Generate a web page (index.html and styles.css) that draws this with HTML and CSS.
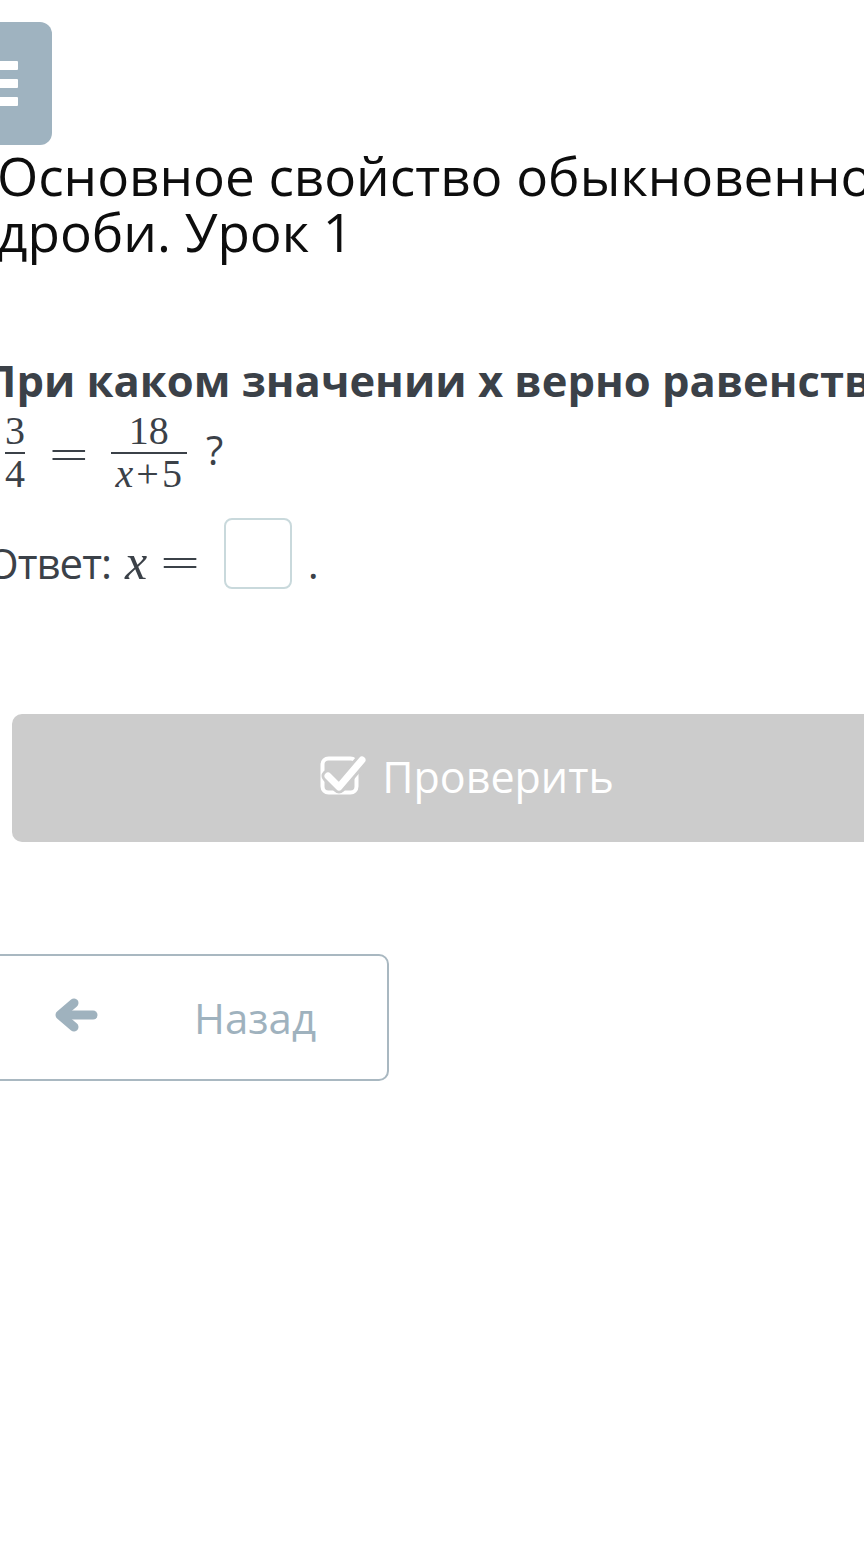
FILE: index.html
```html
<!DOCTYPE html>
<html lang="ru">
<head>
<meta charset="utf-8">
<link rel="stylesheet" href="styles.css">
</head>
<body>
<div class="page">
  <div class="menu-btn">
    <span class="bar"></span><span class="bar"></span><span class="bar"></span>
  </div>
  <h1 class="title">Основное свойство обыкновенной дроби. Урок 1</h1>
  <div class="question">
    <p class="q-text">При каком значении x верно равенство</p>
    <div class="formula">
      <span class="frac small"><span class="num">3</span><span class="den">4</span></span>
      <span class="eq">=</span>
      <span class="frac wide"><span class="num">18</span><span class="den"><i>x</i><span class="plus">+</span>5</span></span>
      <span class="qmark">?</span>
    </div>
    <div class="answer">
      <span class="ans-text">
        <span class="ans-label">Ответ:</span>
        <span class="ans-x"><i>x</i></span>
        <span class="ans-eq">=</span>
      </span>
      <span class="ans-box"></span>
      <span class="ans-dot">.</span>
    </div>
  </div>
  <div class="check-row">
    <div class="check-btn">
      <svg class="check-icon" viewBox="0 0 46 40" width="46" height="40">
        <rect x="2.5" y="2.5" width="34" height="34" rx="6" fill="none" stroke="#fff" stroke-width="4"/>
        <path d="M8 20 L19 31 L42 4" fill="none" stroke="#cccccc" stroke-width="13" stroke-linecap="round" stroke-linejoin="round"/>
        <path d="M8 20 L19 31 L42 4" fill="none" stroke="#fff" stroke-width="7" stroke-linecap="round" stroke-linejoin="round"/>
      </svg>
      <span class="check-text">Проверить</span>
    </div>
  </div>
  <div class="nav-row">
    <div class="back-btn">
      <svg class="back-icon" viewBox="0 0 46 36" width="46" height="36">
        <path d="M21 6 L7 18 L21 30" fill="none" stroke="#9fb2be" stroke-width="9" stroke-linecap="round" stroke-linejoin="round"/>
        <path d="M9 18 H40" fill="none" stroke="#9fb2be" stroke-width="9" stroke-linecap="round"/>
      </svg>
      <span class="back-text">Назад</span>
    </div>
  </div>
</div>
</body>
</html>
```
FILE: styles.css
```css
html, body {
  margin: 0;
  padding: 0;
  background: #fff;
  overflow: hidden;
}
body {
  width: 864px;
  height: 1554px;
  font-family: "Open Sans", "Noto Sans", sans-serif;
}
.page {
  margin-left: -10px;
  width: 1000px;
  padding-top: 22px;
}
.menu-btn {
  margin-left: -61px;
  width: 123px;
  height: 123px;
  border-radius: 12px;
  background: #9fb3c0;
  display: flex;
  flex-direction: column;
  justify-content: center;
  align-items: center;
  gap: 9px;
}
.menu-btn .bar {
  display: block;
  width: 55px;
  height: 9px;
  background: #fff;
  border-radius: 1px;
}
.title {
  margin: 3px 0 0 7px;
  font-weight: 400;
  font-size: 53px;
  line-height: 56px;
  color: #0d0d0d;
  width: 960px;
}
.question {
  margin-top: 97px;
  color: #3b4148;
}
.q-text {
  margin: 0 0 0 -6px;
  font-weight: 700;
  font-size: 43.5px;
  line-height: 48px;
  white-space: nowrap;
}
.formula {
  display: flex;
  align-items: center;
  margin-left: 15px;
  margin-top: 8px;
  font-family: "Liberation Serif", "DejaVu Serif", serif;
}
.frac {
  display: inline-flex;
  flex-direction: column;
  align-items: stretch;
  text-align: center;
  font-size: 40px;
  line-height: 36px;
}
.frac .num {
  padding: 0 0 3px;
}
.frac .den {
  border-top: 2px solid #3b4148;
  padding: 2px 0 0;
}
.frac.wide .num, .frac.wide .den {
  padding-left: 5px;
  padding-right: 5px;
}
.plus {
  margin: 0 3px;
}
.eq {
  font-family: "DejaVu Sans", sans-serif;
  font-weight: 200;
  font-size: 52px;
  line-height: 1;
  margin: 0 20px 0 22px;
}
.qmark {
  font-family: "Open Sans", sans-serif;
  font-size: 40px;
  margin-left: 19px;
  margin-top: -6px;
}
.answer {
  display: flex;
  align-items: flex-start;
  margin-top: 26px;
  height: 72px;
}
.ans-text {
  display: flex;
  align-items: baseline;
  margin-top: 20px;
  margin-left: -4px;
}
.ans-label {
  font-size: 42px;
  line-height: 50px;
  letter-spacing: -1px;
}
.ans-x {
  font-family: "Liberation Serif", "DejaVu Serif", serif;
  font-size: 50px;
  line-height: 40px;
  margin-left: 14px;
}
.ans-eq {
  font-family: "DejaVu Sans", sans-serif;
  font-weight: 200;
  font-size: 52px;
  line-height: 40px;
  margin-left: 11px;
}
.ans-box {
  width: 64px;
  height: 67px;
  border: 2px solid #c9d9dc;
  border-radius: 8px;
  margin-left: 22px;
  background: #fff;
}
.ans-dot {
  font-size: 42px;
  line-height: 50px;
  margin-top: 20px;
  margin-left: 16px;
}
.check-row {
  margin-top: 124px;
  padding-left: 22px;
}
.check-btn {
  width: 910px;
  height: 128px;
  border-radius: 10px;
  background: #cccccc;
  color: #fff;
  display: flex;
  align-items: center;
  justify-content: center;
  gap: 16px;
  font-size: 43px;
}
.check-icon {
  margin-top: -4px;
}
.check-text {
  margin-top: -4px;
}
.nav-row {
  margin-top: 112px;
}
.back-btn {
  margin-left: -40px;
  width: 435px;
  height: 123px;
  border: 2px solid #a9b8c1;
  border-radius: 10px;
  display: flex;
  align-items: center;
}
.back-icon {
  margin-left: 101px;
  margin-top: -6px;
}
.back-text {
  margin-left: 95px;
  font-size: 42px;
  color: #9fb2be;
}
```
